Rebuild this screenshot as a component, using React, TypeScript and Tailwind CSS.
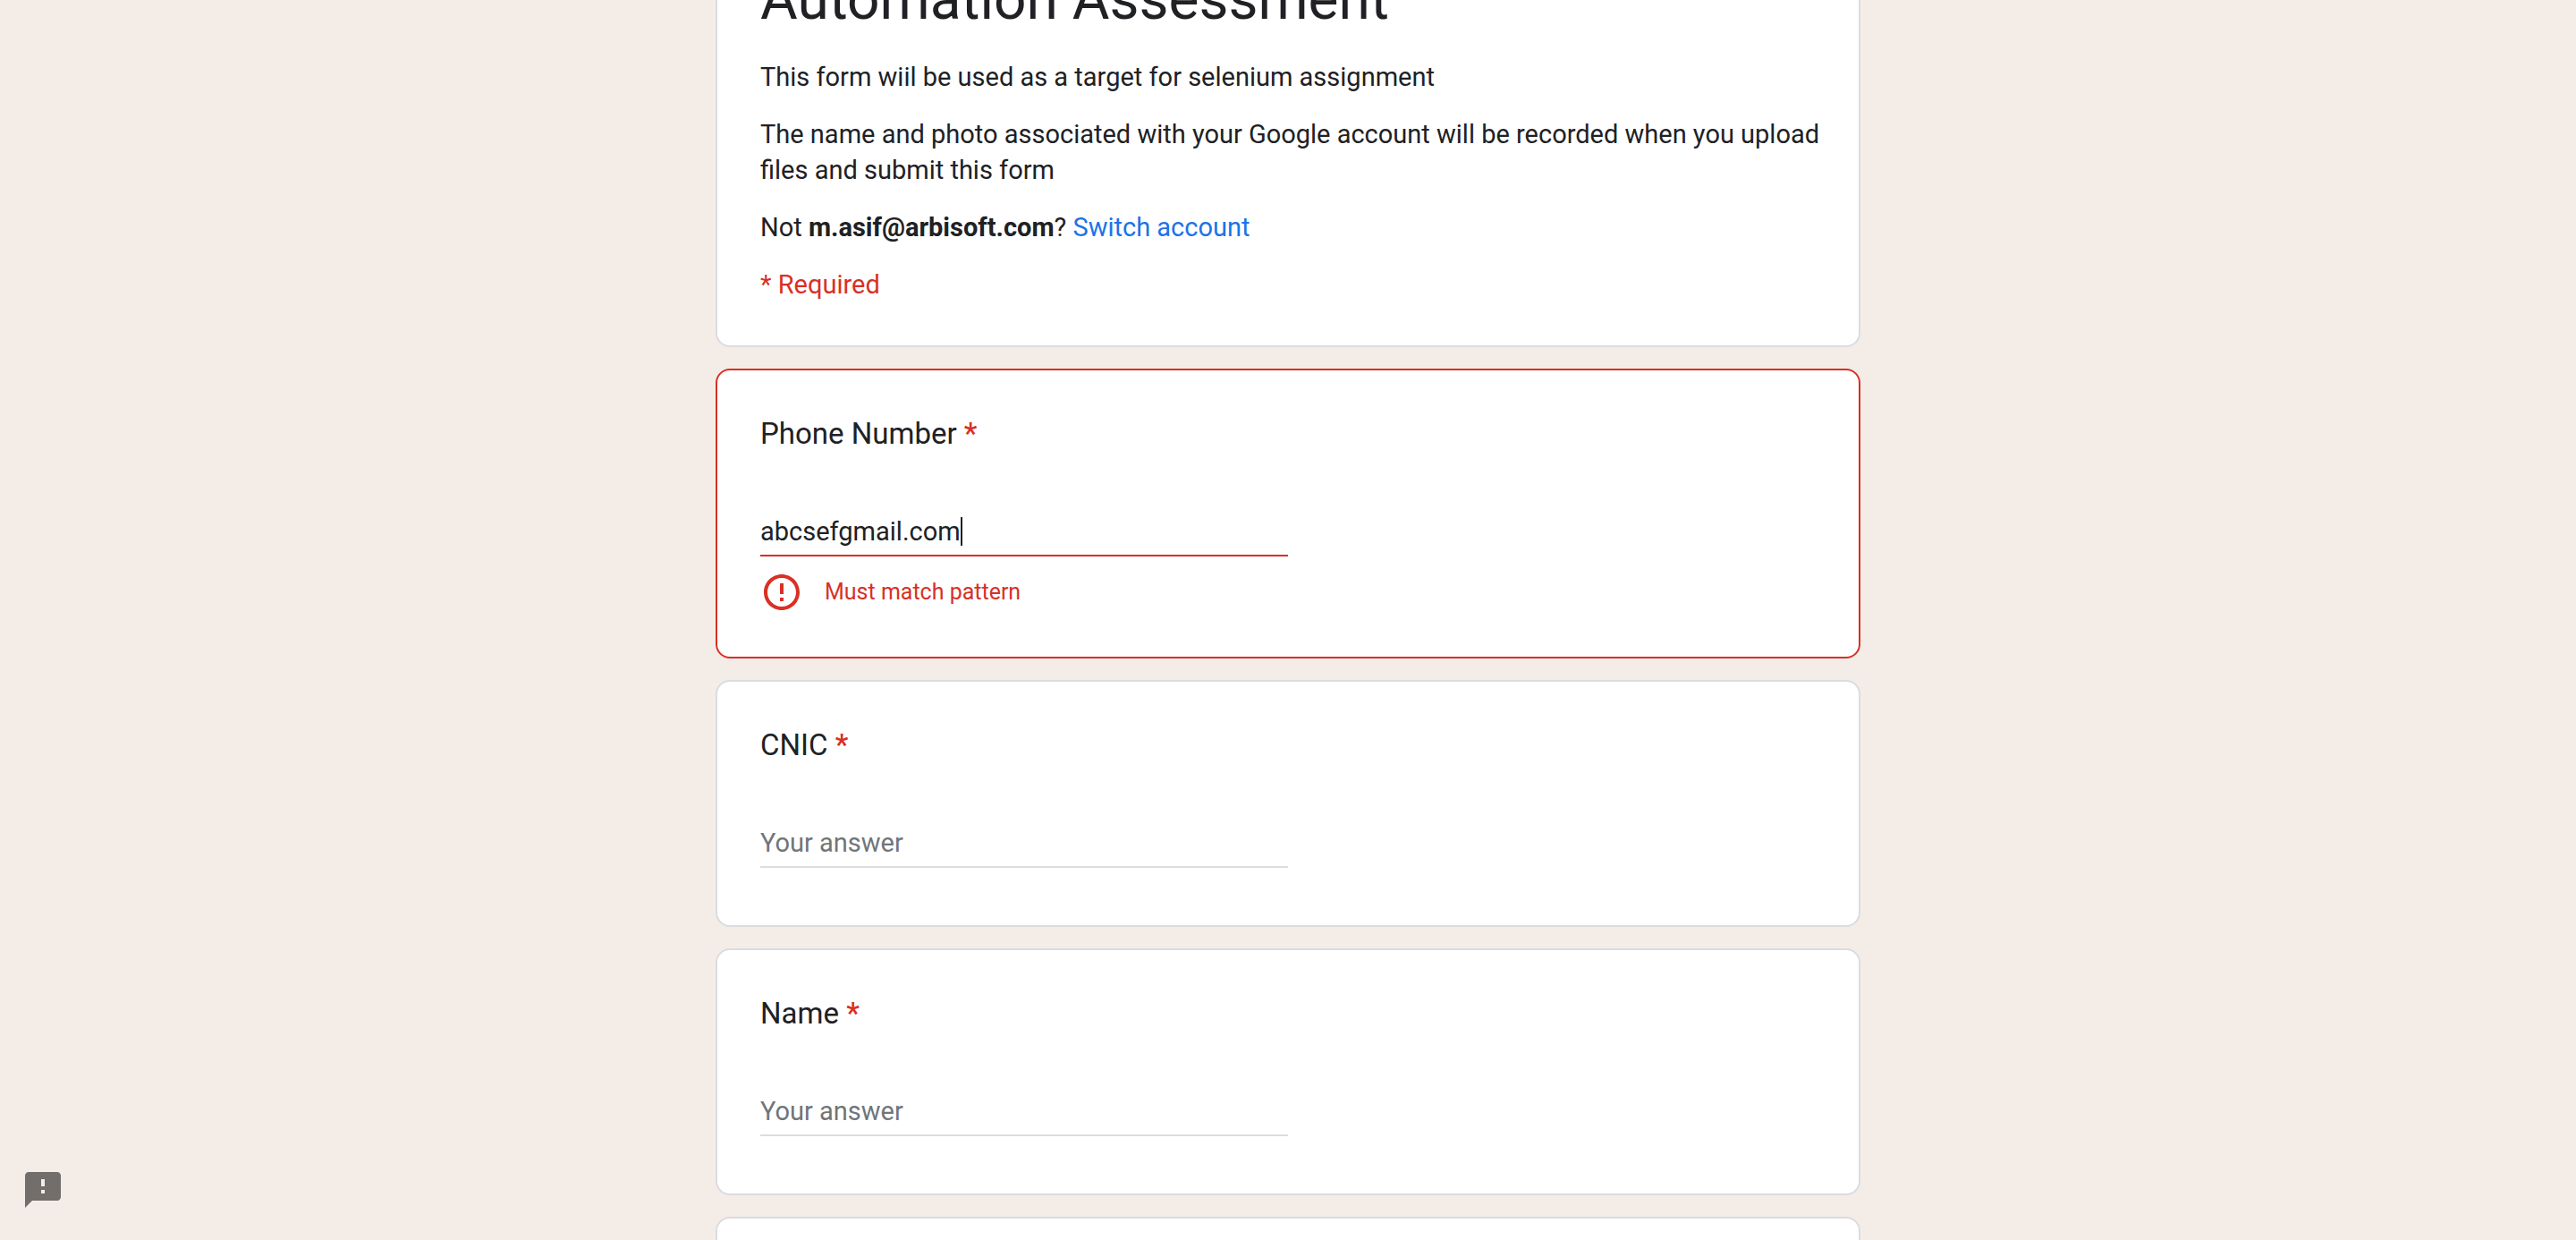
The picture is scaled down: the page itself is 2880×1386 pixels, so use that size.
import { useState } from "react";

type Field = { id: string; label: string; value: string; error?: string; focused?: boolean };

const initialFields: Field[] = [
  { id: "phone", label: "Phone Number", value: "abcsefgmail.com", error: "Must match pattern", focused: true },
  { id: "cnic", label: "CNIC", value: "" },
  { id: "name", label: "Name", value: "" },
];

function ErrorIcon() {
  return (
    <svg viewBox="0 0 24 24" className="size-12 shrink-0 fill-[#d93025]" aria-hidden="true">
      <path d="M11 15h2v2h-2zm0-8h2v6h-2zm.99-5C6.47 2 2 6.48 2 12s4.47 10 9.99 10C17.52 22 22 17.52 22 12S17.52 2 11.99 2zM12 20c-4.42 0-8-3.58-8-8s3.58-8 8-8 8 3.58 8 8-3.58 8-8 8z" />
    </svg>
  );
}

function FeedbackIcon() {
  return (
    <svg viewBox="0 0 24 24" className="size-12 fill-[#716e6b]" aria-hidden="true">
      <path d="M20 2H4c-1.1 0-1.99.9-1.99 2L2 22l4-4h14c1.1 0 2-.9 2-2V4c0-1.1-.9-2-2-2zm-7 12h-2v-2h2v2zm0-4h-2V6h2v4z" />
    </svg>
  );
}

function Question({ field }: { field: Field }) {
  const [value, setValue] = useState(field.value);
  const invalid = Boolean(field.error);
  return (
    <section className={`rounded-2xl border-2 bg-white p-12 ${invalid ? "border-[#d93025]" : "border-[#dadce0]"}`}>
      <label htmlFor={field.id} className="block text-[33px] leading-[46px]">
        {field.label} <span className="font-medium text-[#d93025]">*</span>
      </label>
      <div className={`mt-[62px] flex w-1/2 items-center border-b-2 pb-0.5 ${invalid ? "border-[#d93025]" : "border-[#dddddd]"}`}>
        <input
          id={field.id}
          type="text"
          required
          placeholder="Your answer"
          value={value}
          onChange={(e) => setValue(e.target.value)}
          aria-invalid={invalid}
          aria-describedby={invalid ? `${field.id}-error` : undefined}
          className={`h-12 max-w-full bg-transparent text-[29px] leading-12 shadow-none outline-none placeholder:text-[#70757a] ${field.focused ? "field-sizing-content" : "w-full"}`}
        />
        {field.focused && <span className="h-8 w-0.5 shrink-0 bg-[#202124]" />}
      </div>
      {invalid ? (
        <p id={`${field.id}-error`} role="alert" className="mt-4 flex items-center gap-6 text-[25px] leading-12 text-[#d93025]">
          <ErrorIcon />
          {field.error}
        </p>
      ) : (
        <div className="h-4" />
      )}
    </section>
  );
}

export default function App() {
  return (
    <div className="h-screen overflow-hidden bg-[#f4ece6] font-['Roboto',sans-serif] text-[#202124]">
      <main className="mx-auto -mt-[90px] flex w-full max-w-[1280px] flex-col gap-6">
        <header className="flex flex-col gap-6 rounded-2xl border-2 border-[#dadce0] bg-white py-12 pr-10 pl-12 text-[29px] leading-10">
          <h1 className="mb-0.5 text-[64px] leading-20">Automation Assessment</h1>
          <p>This form wiil be used as a target for selenium assignment</p>
          <p>The name and photo associated with your Google account will be recorded when you upload files and submit this form</p>
          <p>
            Not <strong className="font-bold">m.asif@arbisoft.com</strong>?{" "}
            <a href="#switch" className="text-[#1a73e8]">Switch account</a>
          </p>
          <p className="text-[#d93025]">* Required</p>
        </header>
        {initialFields.map((field) => (
          <Question key={field.id} field={field} />
        ))}
        <section className="min-h-48 rounded-2xl border-2 border-[#dadce0] bg-white p-12" />
      </main>
      <button type="button" aria-label="Report a problem" className="fixed bottom-8 left-6">
        <FeedbackIcon />
      </button>
    </div>
  );
}
